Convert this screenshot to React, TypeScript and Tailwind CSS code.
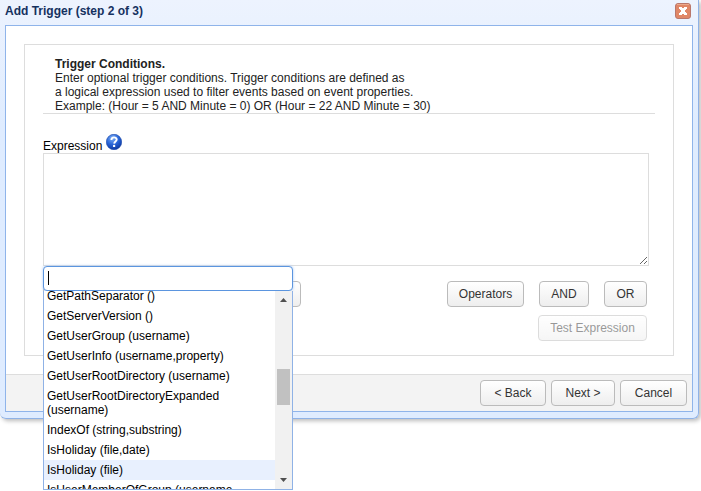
import { useState } from "react";
import type { ButtonHTMLAttributes } from "react";
import clsx from "clsx";

const functions = [
  "GetPathSeparator ()",
  "GetServerVersion ()",
  "GetUserGroup (username)",
  "GetUserInfo (username,property)",
  "GetUserRootDirectory (username)",
  "GetUserRootDirectoryExpanded (username)",
  "IndexOf (string,substring)",
  "IsHoliday (file,date)",
  "IsHoliday (file)",
  "IsUserMemberOfGroup (username, groupname)",
];

function Button({ className, ...props }: ButtonHTMLAttributes<HTMLButtonElement>) {
  return (
    <button
      type="button"
      {...props}
      className={clsx(
        "h-[26px] rounded border border-[#bbb] bg-linear-to-b from-white to-[#eee] text-[#333] whitespace-nowrap disabled:opacity-50",
        className
      )}
    />
  );
}

function CloseIcon() {
  return (
    <svg width="16" height="16" viewBox="0 0 16 16" aria-hidden="true">
      <rect x="0.5" y="0.5" width="15" height="15" rx="2.5" fill="#e08767" stroke="#b9776b" />
      <path d="M2 1.5h12" stroke="#eba98c" />
      <path
        d="M4 4h3v1h2V4h3v2h-1v1h-1v2h1v1h1v2H9v-1H7v1H4v-2h1V9h1V7H5V6H4z"
        fill="#fff"
      />
    </svg>
  );
}

function HelpIcon() {
  return (
    <svg width="16" height="16" viewBox="0 0 16 16" aria-hidden="true">
      <defs>
        <radialGradient id="help" cx="0.4" cy="0.25" r="0.8">
          <stop offset="0" stopColor="#7fb0f5" />
          <stop offset="0.5" stopColor="#2a66d8" />
          <stop offset="1" stopColor="#0b349c" />
        </radialGradient>
      </defs>
      <circle cx="8" cy="8" r="7.7" fill="url(#help)" stroke="#1745a8" strokeWidth="0.6" />
      <path d="M5.4 6.1c0-3.6 5.3-3.4 5.3-.5 0 1.9-2.3 2-2.5 4" fill="none" stroke="#fff" strokeWidth="1.9" />
      <circle cx="8.1" cy="11.9" r="1.2" fill="#fff" />
    </svg>
  );
}

function FunctionPicker() {
  const [selected, setSelected] = useState("IsHoliday (file)");
  const [query, setQuery] = useState("");

  return (
    <div className="absolute left-0 top-0 z-10 w-[250px]">
      <input
        type="text"
        aria-label="Search functions"
        autoFocus
        value={query}
        onChange={(e) => setQuery(e.target.value)}
        className="block w-full h-[25px] px-1 rounded border border-[#5b95df] bg-white outline-none shadow-[0_0_3px_#a9c9f5]"
      />
      {query === "" && <span className="absolute left-[5px] top-[5px] w-px h-[14px] bg-black" />}
      <div className="flex h-[199px] border border-t-0 border-[#8fb2e6] bg-white overflow-hidden">
        <ul role="listbox" aria-label="Functions" className="flex-1 -mt-[5px]">
          {functions.map((name) => (
            <li
              key={name}
              role="option"
              aria-selected={name === selected}
              onClick={() => setSelected(name)}
              className="px-[3px] py-[3px] text-black aria-selected:bg-[#e8f0fe]">
              {name}
            </li>
          ))}
        </ul>
        <div className="w-[17px] flex flex-col items-center bg-[#f1f1f1]">
          <svg className="mt-[7px]" width="7" height="4" aria-hidden="true">
            <path d="M0 4L3.5 0L7 4z" fill="#505050" />
          </svg>
          <div className="mt-[67px] w-[13px] h-[36px] bg-[#c1c1c1]" />
          <svg className="mt-auto mb-[7px]" width="7" height="4" aria-hidden="true">
            <path d="M0 0L3.5 4L7 0z" fill="#505050" />
          </svg>
        </div>
      </div>
    </div>
  );
}

export default function App() {
  return (
    <div className="min-h-[491px] overflow-hidden bg-white pr-[2px] font-['Liberation_Sans',Arial,sans-serif] text-[12px] leading-[14px] text-[#222]">
      <section
        aria-labelledby="dialog-title"
        className="rounded-b-md border-r border-b border-[#8fb2e6] bg-linear-to-b from-[#edf3fe] to-[#dfecff] to-30% px-[5px] pb-[6px] shadow-[2px_2px_4px_#bbb]">
        <header className="flex h-[25px] items-start justify-between pt-[3px] pr-[2px]">
          <h1 id="dialog-title" className="pt-px font-bold text-[#15315f]">
            Add Trigger (step 2 of 3)
          </h1>
          <button type="button" aria-label="Close">
            <CloseIcon />
          </button>
        </header>
        <div className="border border-[#8fb4ea] bg-white">
          <main className="mx-[18px] my-[18px] border border-[#ddd] px-[18px] pt-[12px] pb-[14px]">
            <div className="border-b border-[#ddd] pl-3">
              <h2 className="font-bold">Trigger Conditions.</h2>
              <p>
                Enter optional trigger conditions. Trigger conditions are defined as
                <br />
                a logical expression used to filter events based on event properties.
                <br />
                Example: (Hour = 5 AND Minute = 0) OR (Hour = 22 AND Minute = 30)
              </p>
            </div>
            <div className="mt-5 flex h-[18px] gap-1 text-black">
              <label htmlFor="expression" className="pt-[5px]">
                Expression
              </label>
              <button type="button" aria-label="Help" className="h-4">
                <HelpIcon />
              </button>
            </div>
            <div className="mr-[6px]">
              <textarea
                id="expression"
                className="mt-px block h-[113px] w-full border border-[#ddd] bg-white outline-none"
              />
              <div className="relative flex justify-between pt-[15px] pr-[2px]">
                <Button aria-label="Functions" className="w-[258px]" />
                <FunctionPicker />
                <div className="flex gap-[15px]">
                  <Button className="w-[77px]">Operators</Button>
                  <Button className="w-[50px]">AND</Button>
                  <Button className="w-[43px]">OR</Button>
                </div>
              </div>
              <div className="mt-2 flex justify-end pr-[2px]">
                <Button disabled className="w-[109px]">
                  Test Expression
                </Button>
              </div>
            </div>
          </main>
          <footer className="flex justify-end gap-[5px] border-t border-[#ddd] bg-[#f3f3f3] p-[5px]">
            <Button className="w-[66px]">&lt; Back</Button>
            <Button className="w-[64px]">Next &gt;</Button>
            <Button className="w-[67px]">Cancel</Button>
          </footer>
        </div>
      </section>
    </div>
  );
}
